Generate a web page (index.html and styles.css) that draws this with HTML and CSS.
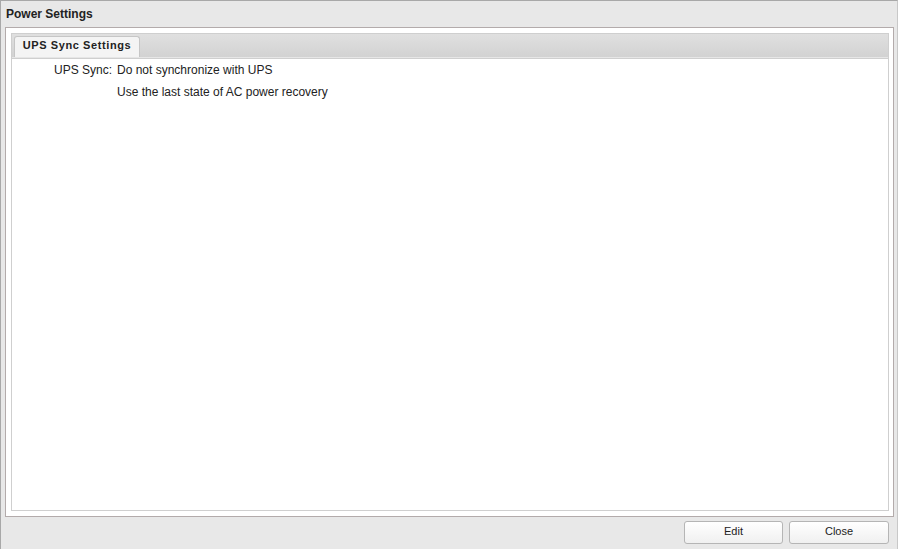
FILE: index.html
```html
<!DOCTYPE html>
<html>
<head>
<meta charset="utf-8">
<link rel="stylesheet" href="styles.css">
</head>
<body>
<div class="window">
  <div class="title">Power Settings</div>
  <div class="panel">
    <div class="tabpanel">
      <div class="tabstrip">
        <div class="tab">UPS Sync Settings</div>
      </div>
      <div class="tabbody">
        <div class="row">
          <div class="label">UPS Sync:</div>
          <div class="value">Do not synchronize with UPS</div>
        </div>
        <div class="row">
          <div class="label"></div>
          <div class="value">Use the last state of AC power recovery</div>
        </div>
      </div>
    </div>
  </div>
  <div class="footer">
    <button class="btn">Edit</button>
    <button class="btn btn-wide">Close</button>
  </div>
</div>
</body>
</html>
```

FILE: styles.css
```css
html, body {
  margin: 0;
  padding: 0;
  background: #ffffff;
}
body {
  font-family: "Liberation Sans", Arial, sans-serif;
  color: #222;
}
.window {
  width: 898px;
  height: 549px;
  box-sizing: border-box;
  border-top: 1px solid #a8a8a8;
  border-left: 1px solid #a8a8a8;
  border-right: 1px solid #c8c8c8;
  background: #e8e8e8;
  display: flex;
  flex-direction: column;
}
.title {
  height: 26px;
  line-height: 26px;
  padding-left: 5px;
  font-size: 12px;
  font-weight: bold;
  color: #222;
}
.panel {
  margin: 0 3px 0 4px;
  height: 490px;
  box-sizing: border-box;
  border: 1px solid #b3abab;
  background: #ffffff;
  padding: 5px 4px 5px 5px;
}
.tabpanel {
  height: 100%;
  box-sizing: border-box;
  border: 1px solid #cfcfcf;
  display: flex;
  flex-direction: column;
}
.tabstrip {
  height: 23px;
  background: linear-gradient(#e0e0e0, #d2d2d2);
  border-bottom: 1px solid #e6e6e6;
  box-shadow: 0 1px 0 #cfcfcf;
  padding-left: 2px;
  display: flex;
  align-items: flex-end;
}
.tab {
  height: 21px;
  line-height: 17px;
  width: 126px;
  box-sizing: border-box;
  border: 1px solid #c6c6c6;
  border-bottom: none;
  border-radius: 3px 3px 0 0;
  background: #f4f4f4;
  font-size: 11px;
  font-weight: bold;
  letter-spacing: 0.6px;
  color: #222;
  text-align: center;
}
.tabbody {
  flex: 1;
  padding-top: 1px;
}
.row {
  display: flex;
  height: 22px;
  line-height: 22px;
  font-size: 12px;
  color: #222;
}
.label {
  width: 100px;
  text-align: right;
  padding-right: 5px;
}
.footer {
  flex: 1;
  display: flex;
  justify-content: flex-end;
  align-items: flex-start;
  gap: 6px;
  padding-right: 8px;
  padding-top: 4px;
}
.btn {
  width: 99px;
  height: 23px;
  box-sizing: border-box;
  border: 1px solid #b5b5b5;
  border-radius: 3px;
  background: linear-gradient(#ffffff, #f0f0f0);
  font-family: "Liberation Sans", Arial, sans-serif;
  font-size: 11px;
  color: #222;
  padding: 0 0 3px 0;
}
.btn-wide {
  width: 100px;
}
```
